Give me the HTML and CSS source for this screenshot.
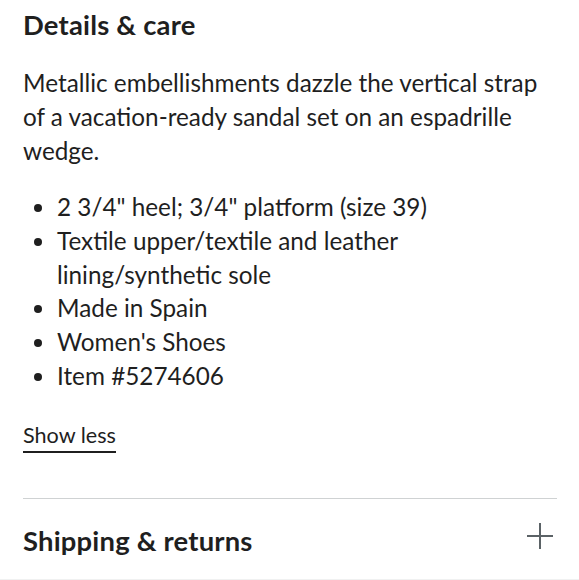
FILE: index.html
```html
<!DOCTYPE html>
<html>
<head>
<meta charset="utf-8">
<link rel="stylesheet" href="styles.css">
</head>
<body>
<div class="panel">
  <section class="details">
    <h2 class="section-title">Details &amp; care</h2>
    <p class="desc">Metallic embellishments dazzle the vertical strap of a vacation-ready sandal set on an espadrille wedge.</p>
    <ul class="features">
      <li>2 3/4" heel; 3/4" platform (size 39)</li>
      <li>Textile upper/textile and leather lining/synthetic sole</li>
      <li>Made in Spain</li>
      <li>Women's Shoes</li>
      <li>Item #5274606</li>
    </ul>
    <button class="toggle">Show less</button>
  </section>
  <div class="accordion-row">
    <h2 class="section-title">Shipping &amp; returns</h2>
    <svg class="plus" width="26" height="26" viewBox="0 0 26 26"><path d="M13 0v26M0 13h26" stroke="#5b6266" stroke-width="2" fill="none"/></svg>
  </div>
</div>
<div class="bottom-edge"></div>
</body>
</html>
```
FILE: styles.css
```css
html, body {
  margin: 0;
  padding: 0;
  background: #fff;
}
body {
  font-family: Lato, "Noto Sans", sans-serif;
  color: #1f1f1f;
  height: 580px;
  overflow: hidden;
  display: flex;
  flex-direction: column;
}
.panel {
  flex: 1;
  padding: 0 22px 0 23px;
}
.section-title {
  margin: 0;
  font-size: 27.4px;
  font-weight: 700;
  letter-spacing: 0.2px;
  line-height: 32px;
}
.details {
  padding-top: 9px;
}
.desc {
  margin: 25px 0 0;
  font-size: 24.3px;
  line-height: 34px;
}
.features {
  margin: 22px 0 0;
  padding: 0 0 0 34px;
  font-size: 24.3px;
  line-height: 33.8px;
}
.toggle {
  margin-top: 28px;
  padding: 0 0 2px;
  border: 0;
  border-bottom: 2px solid #1f1f1f;
  background: none;
  font: inherit;
  font-size: 21.6px;
  line-height: 28px;
  color: #1f1f1f;
}
.accordion-row {
  margin-top: 45px;
  border-top: 1px solid #cfd2d3;
  padding: 26px 4px 0 0;
  display: flex;
  justify-content: space-between;
  align-items: center;
}
.plus {
  margin-top: -9px;
}
.bottom-edge {
  height: 1px;
  background: #f0f1f1;
}
```
